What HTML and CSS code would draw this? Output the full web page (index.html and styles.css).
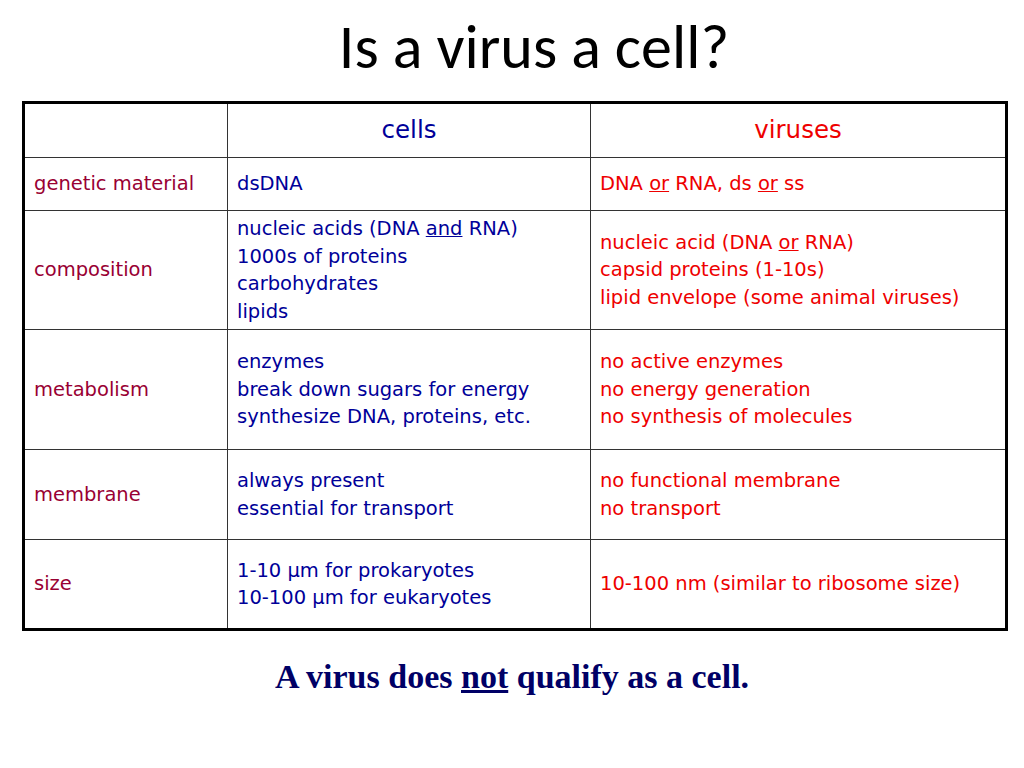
FILE: index.html
```html
<!DOCTYPE html>
<html>
<head>
<meta charset="utf-8">
<link rel="stylesheet" href="styles.css">
</head>
<body>
<div class="slide">
  <h1 class="title">Is a virus a cell?</h1>
  <table class="cmp">
    <colgroup>
      <col class="c1"><col class="c2"><col class="c3">
    </colgroup>
    <tr class="r-head">
      <td></td>
      <td class="head cell-col">cells</td>
      <td class="head virus-col">viruses</td>
    </tr>
    <tr class="r-gen">
      <td class="label">genetic material</td>
      <td class="cell-col">dsDNA</td>
      <td class="virus-col">DNA <u>or</u> RNA, ds <u>or</u> ss</td>
    </tr>
    <tr class="r-comp">
      <td class="label">composition</td>
      <td class="cell-col">nucleic acids (DNA <u>and</u> RNA)<br>1000s of proteins<br>carbohydrates<br>lipids</td>
      <td class="virus-col">nucleic acid (DNA <u>or</u> RNA)<br>capsid proteins (1-10s)<br>lipid envelope (some animal viruses)</td>
    </tr>
    <tr class="r-met">
      <td class="label">metabolism</td>
      <td class="cell-col">enzymes<br>break down sugars for energy<br>synthesize DNA, proteins, etc.</td>
      <td class="virus-col">no active enzymes<br>no energy generation<br>no synthesis of molecules</td>
    </tr>
    <tr class="r-mem">
      <td class="label">membrane</td>
      <td class="cell-col">always present<br>essential for transport</td>
      <td class="virus-col">no functional membrane<br>no transport</td>
    </tr>
    <tr class="r-size">
      <td class="label">size</td>
      <td class="cell-col">1-10 µm for prokaryotes<br>10-100 µm for eukaryotes</td>
      <td class="virus-col">10-100 nm (similar to ribosome size)</td>
    </tr>
  </table>
  <p class="conclusion">A virus does <u>not</u> qualify as a cell.</p>
</div>
</body>
</html>
```
FILE: styles.css
```css
html, body {
  margin: 0;
  padding: 0;
  background: #ffffff;
}
.slide {
  width: 1024px;
  height: 768px;
  overflow: hidden;
}
.title {
  margin: 0;
  padding-top: 14px;
  height: 82px;
  box-sizing: border-box;
  text-align: center;
  font-family: "Carlito", "Open Sans", "Liberation Sans", sans-serif;
  font-weight: normal;
  font-size: 62px;
  line-height: 66px;
  color: #000;
  padding-left: 44px;
}
.cmp {
  margin: 19px 0 0 22px;
  border-collapse: collapse;
  border: 3px solid #000;
  width: 983px;
  table-layout: fixed;
  font-family: "DejaVu Sans", sans-serif;
  font-size: 19.5px;
  line-height: 27.5px;
}
.c1 { width: 204px; }
.c2 { width: 363px; }
.c3 { width: 416px; }
.cmp td {
  border: 1px solid #333;
  padding: 0 0 0 9px;
  vertical-align: middle;
  text-align: left;
  white-space: nowrap;
}
.cmp td.head {
  text-align: center;
  padding: 0 0 2px 0;
  font-size: 24.5px;
}
.label { color: #990033; }
.cell-col { color: #000099; }
.virus-col { color: #ee0000; }
.r-head { height: 55px; }
.r-gen { height: 53px; }
.r-comp { height: 119px; }
.r-met { height: 120px; }
.r-mem { height: 90px; }
.r-size { height: 90px; }
.conclusion {
  margin: 26px 0 0 0;
  text-align: center;
  font-family: "Liberation Serif", serif;
  font-weight: bold;
  font-size: 34px;
  line-height: 40px;
  color: #000066;
}
```
